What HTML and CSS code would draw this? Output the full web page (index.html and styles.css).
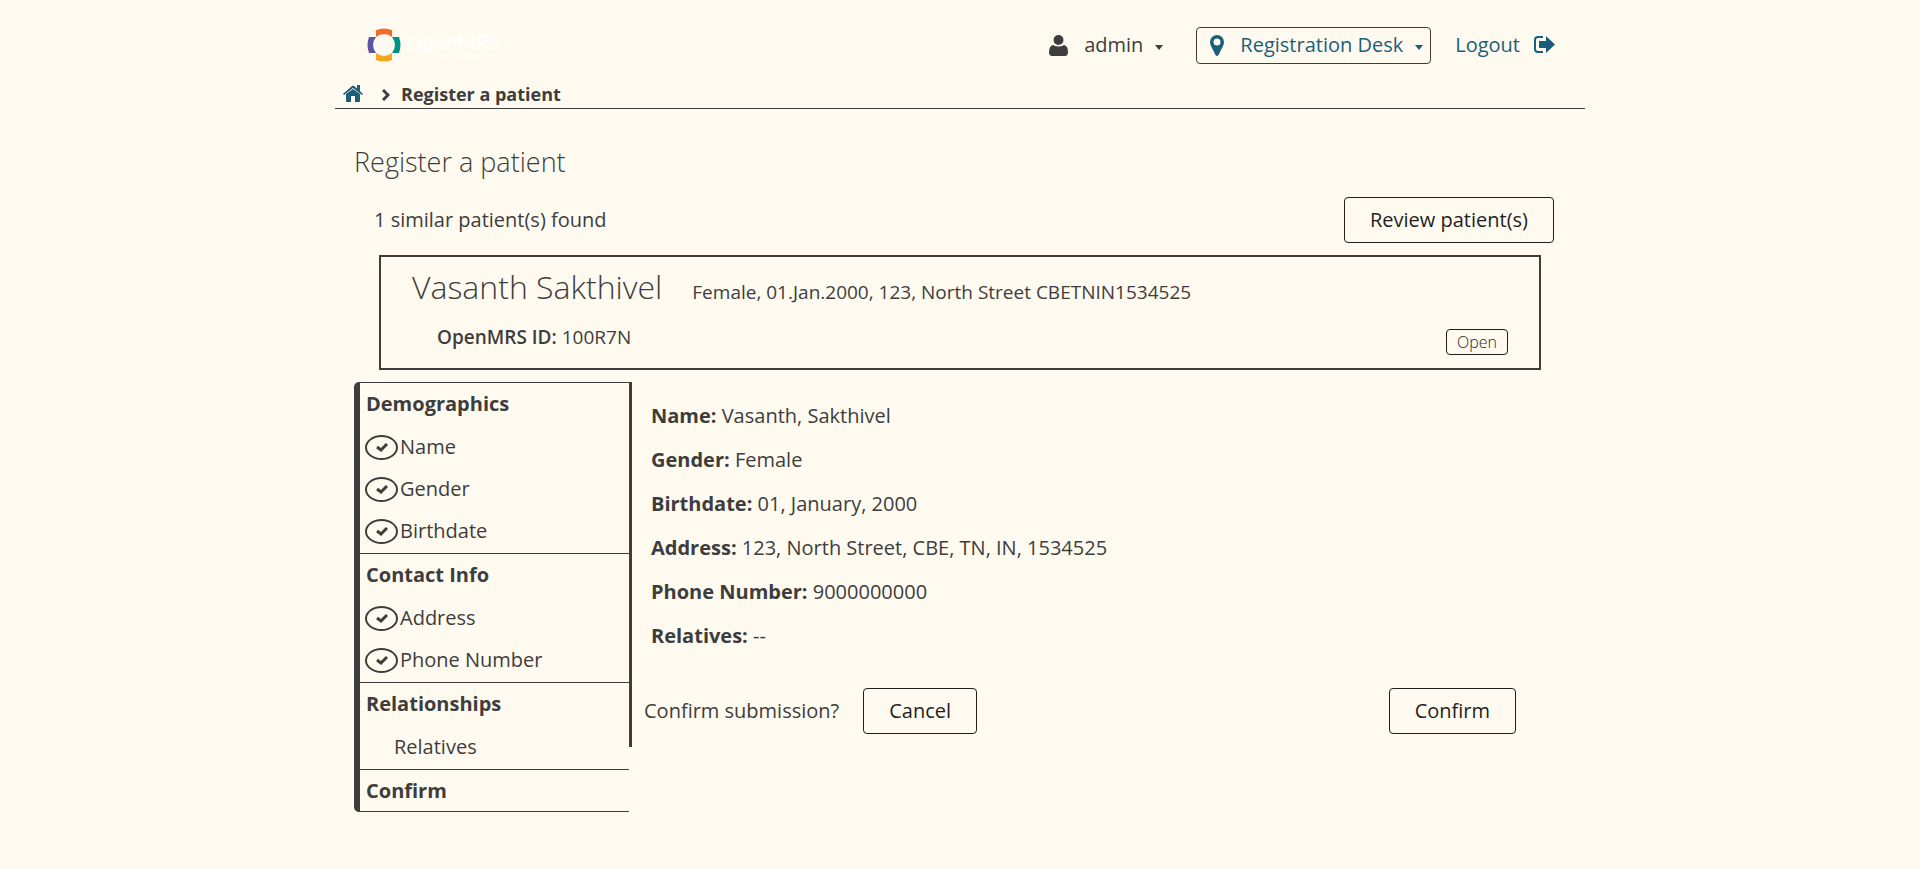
FILE: index.html
```html
<!DOCTYPE html>
<html lang="en">
<head>
<meta charset="utf-8">
<title>Register a patient</title>
<link rel="stylesheet" href="styles.css">
</head>
<body>
<div class="page">
  <header class="header">
    <a class="logo" href="#" aria-label="OpenMRS home">
      <svg class="logo-mark" viewBox="0 0 34 34" aria-hidden="true">
        <path fill="#f26c2a" d="M9 2Q17-1 25 2V9Q17 3 9 9Z"/>
        <path fill="#5b57a6" d="M2 9Q-1 17 2 25H9Q3 17 9 9Z"/>
        <path fill="#009384" d="M32 9Q35 17 32 25H25Q31 17 25 9Z"/>
        <path fill="#f0a81c" d="M9 32Q17 35 25 32V25Q17 31 9 25Z"/>
      </svg>
      <span class="logo-text"><span class="logo-name">OpenMRS</span><span class="logo-tag">MEDICAL RECORD SYSTEM</span></span>
    </a>
    <nav class="user-nav">
      <button class="user" type="button">
        <svg class="icon-user" viewBox="0 0 19 21" aria-hidden="true"><circle cx="9.500" cy="5" r="5"/><path d="M4 10Q9.500 13 15 10Q19 11 19 17Q19 21 16 21H3Q0 21 0 17Q0 11 4 10Z"/></svg>
        <span>admin</span>
        <svg class="caret" viewBox="0 0 8 5" aria-hidden="true"><path d="M0 0H8L4 5Z"/></svg>
      </button>
      <button class="location" type="button">
        <svg class="icon-pin" viewBox="0 0 14 21" aria-hidden="true"><path fill-rule="evenodd" d="M7 0A7 7 0 0 1 14 7Q14 9 13 11L8.500 20Q7 22 5.500 20L1 11Q0 9 0 7A7 7 0 0 1 7 0ZM7 3.500A3.500 3.500 0 1 0 7 10.500A3.500 3.500 0 1 0 7 3.500Z"/></svg>
        <span>Registration Desk</span>
        <svg class="caret" viewBox="0 0 8 5" aria-hidden="true"><path d="M0 0H8L4 5Z"/></svg>
      </button>
      <a class="logout" href="#">
        <span>Logout</span>
        <svg class="icon-logout" viewBox="0 0 21 18" aria-hidden="true"><path d="M9 0H4Q0 0 0 4V13Q0 17 4 17H9V15H4Q2 15 2 13V4Q2 2 4 2H9ZM5 5H12V0L21 8.500L12 17V12H5Z"/></svg>
      </a>
    </nav>
  </header>
  <nav class="breadcrumbs" aria-label="Breadcrumb">
    <a href="#" aria-label="Home"><svg class="icon-home" viewBox="0 0 20 17" aria-hidden="true"><path d="M10 4L17 9V16Q17 17 16 17H12V11H8V17H4Q3 17 3 16V9ZM0 9L9 1Q10 0 11 1L14 3.500V0H17V6L20 9L19 10L10 3L1 10Z"/></svg></a>
    <svg class="icon-chevron" viewBox="0 0 8 12" aria-hidden="true"><path d="M1 1L6 6L1 11"/></svg>
    <span>Register a patient</span>
  </nav>
  <main class="content">
    <h1 class="title">Register a patient</h1>
    <div class="similar">
      <span>1 similar patient(s) found</span>
      <button class="button" type="button">Review patient(s)</button>
    </div>
    <section class="match">
      <div class="match-head">
        <h2 class="match-name">Vasanth Sakthivel</h2>
        <span>Female, 01.Jan.2000, 123, North Street CBETNIN1534525</span>
      </div>
      <div class="match-foot">
        <span class="match-id"><b>OpenMRS ID:</b> 100R7N</span>
        <button class="button-small" type="button">Open</button>
      </div>
    </section>
    <div class="wizard">
      <ul class="steps">
        <li class="group"><span class="group-title">Demographics</span>
          <ul>
            <li class="step done"><span class="check"><svg viewBox="0 0 12 9" aria-hidden="true"><path d="M1 4L5 7L11 1"/></svg></span>Name</li>
            <li class="step done"><span class="check"><svg viewBox="0 0 12 9" aria-hidden="true"><path d="M1 4L5 7L11 1"/></svg></span>Gender</li>
            <li class="step done"><span class="check"><svg viewBox="0 0 12 9" aria-hidden="true"><path d="M1 4L5 7L11 1"/></svg></span>Birthdate</li>
          </ul>
        </li>
        <li class="group"><span class="group-title">Contact Info</span>
          <ul>
            <li class="step done"><span class="check"><svg viewBox="0 0 12 9" aria-hidden="true"><path d="M1 4L5 7L11 1"/></svg></span>Address</li>
            <li class="step done"><span class="check"><svg viewBox="0 0 12 9" aria-hidden="true"><path d="M1 4L5 7L11 1"/></svg></span>Phone Number</li>
          </ul>
        </li>
        <li class="group"><span class="group-title">Relationships</span>
          <ul>
            <li class="step">Relatives</li>
          </ul>
        </li>
        <li class="group"><span class="group-title">Confirm</span></li>
      </ul>
      <form class="form">
        <div class="summary">
          <p><b>Name:</b> Vasanth, Sakthivel</p>
          <p><b>Gender:</b> Female</p>
          <p><b>Birthdate:</b> 01, January, 2000</p>
          <p><b>Address:</b> 123, North Street, CBE, TN, IN, 1534525</p>
          <p><b>Phone Number:</b> 9000000000</p>
          <p><b>Relatives:</b> --</p>
        </div>
        <div class="actions">
          <span>Confirm submission?</span>
          <button class="button" type="button">Cancel</button>
          <button class="button confirm" type="submit">Confirm</button>
        </div>
      </form>
    </div>
  </main>
</div>
</body>
</html>
```
FILE: styles.css
```css
* {
  box-sizing: border-box;
}

body {
  margin: 0;
  background: #fffaf0;
  color: #3d3d3d;
  font: 400 20px/24px "Open Sans", "Noto Sans", sans-serif;
}

button {
  font: inherit;
  color: inherit;
  background: none;
  border: 0;
  padding: 0;
}

a {
  color: #1b5e79;
  text-decoration: none;
}

ul {
  list-style: none;
  margin: 0;
  padding: 0;
}

svg {
  fill: currentColor;
  flex: none;
}

.page {
  max-width: 1250px;
  margin: 0 auto;
}

.header {
  display: flex;
  justify-content: space-between;
  align-items: center;
  height: 80px;
  padding: 10px 30px 0 32px;
}

.logo {
  display: flex;
  align-items: center;
  gap: 5px;
  color: #fff;
}

.logo-mark {
  width: 34px;
  height: 34px;
}

.logo-text {
  display: flex;
  flex-direction: column;
  align-items: flex-end;
  font-family: Lato, sans-serif;
}

.logo-name {
  font-size: 21px;
  line-height: 24px;
}

.logo-tag {
  font-size: 5px;
  line-height: 6px;
}

.user-nav,
.user,
.location,
.logout {
  display: flex;
  align-items: center;
}

.user,
.location {
  gap: 12px;
}

.user {
  margin-right: 33px;
}

.location {
  height: 37px;
  padding: 0 7px 0 13px;
  border: 1px solid #3d3d3d;
  border-radius: 4px;
  color: #1b5e79;
}

.caret {
  width: 8px;
  height: 5px;
  margin-top: 4px;
}

.logout {
  gap: 14px;
  margin-left: 24px;
}

.icon-user {
  width: 19px;
  height: 21px;
  margin-right: 4px;
}

.icon-pin {
  width: 14px;
  height: 21px;
  margin-right: 4px;
}

.icon-logout {
  width: 21px;
  height: 18px;
}

.breadcrumbs {
  display: flex;
  align-items: center;
  height: 29px;
  padding: 0 8px;
  border-bottom: 1px solid #3d3d3d;
  font-size: 18px;
  font-weight: 700;
}

.icon-home {
  display: block;
  width: 20px;
  height: 17px;
  margin-bottom: 2px;
}

.icon-chevron {
  width: 8px;
  height: 12px;
  margin: 2px 11px 0 19px;
  fill: none;
  stroke: currentColor;
  stroke-width: 3;
}

.content {
  padding: 37px 31px 0 19px;
}

.title {
  margin: 0;
  font-size: 27px;
  line-height: 32px;
  font-weight: 300;
}

.similar {
  display: flex;
  justify-content: space-between;
  align-items: center;
  margin-top: 19px;
  padding-left: 20px;
}

.button {
  height: 46px;
  padding: 0 25px;
  border: 1px solid #1e1e1e;
  border-radius: 4px;
  color: #1e1e1e;
}

.match {
  margin: 12px 13px 0 25px;
  padding: 12px 31px 13px;
  border: 2px solid #3d3d3d;
}

.match-head {
  display: flex;
  align-items: baseline;
  gap: 30px;
  font-size: 19px;
}

.match-name {
  margin: 0;
  font-size: 32px;
  line-height: 36px;
  font-weight: 300;
}

.match-foot {
  display: flex;
  justify-content: space-between;
  align-items: flex-end;
  margin-top: 24px;
  padding-left: 25px;
  font-size: 19px;
}

.match-id {
  align-self: flex-start;
  line-height: 16px;
}

.match-id b {
  font-weight: 600;
}

.button-small {
  height: 26px;
  padding: 0 10px;
  border: 1px solid #1e1e1e;
  border-radius: 4px;
  color: #1e1e1e;
  font-size: 16px;
  font-weight: 300;
}

.wizard {
  display: grid;
  grid-template-columns: 275px 1fr;
  align-items: start;
  margin-top: 12px;
}

.steps {
  border-left: 6px solid #3d3d3d;
  border-bottom: 1px solid #3d3d3d;
  border-radius: 5px 0 0 5px;
}

.group {
  border-top: 1px solid #3d3d3d;
}

.group-title {
  display: block;
  padding: 9px 6px 11px;
  font-weight: 700;
}

.group:last-child .group-title {
  padding-bottom: 8px;
}

.step {
  display: flex;
  align-items: center;
  height: 42px;
  padding: 0 0 2px 34px;
}

.done {
  gap: 2px;
  padding-left: 5px;
}

.check {
  display: grid;
  place-items: center;
  width: 33px;
  height: 25px;
  border: 2px solid #3d3d3d;
  border-radius: 50%;
}

.check svg {
  width: 12px;
  height: 9px;
  fill: none;
  stroke: currentColor;
  stroke-width: 3;
}

.form {
  padding: 22px 25px 13px 12px;
  border-left: 3px solid #3d3d3d;
}

.summary {
  padding-left: 7px;
}

.summary p {
  margin: 0 0 20px;
}

.actions {
  display: flex;
  align-items: center;
  margin-top: 40px;
}

.actions .button {
  margin-left: 24px;
}

.actions .confirm {
  margin: 0 13px 0 auto;
}
```
